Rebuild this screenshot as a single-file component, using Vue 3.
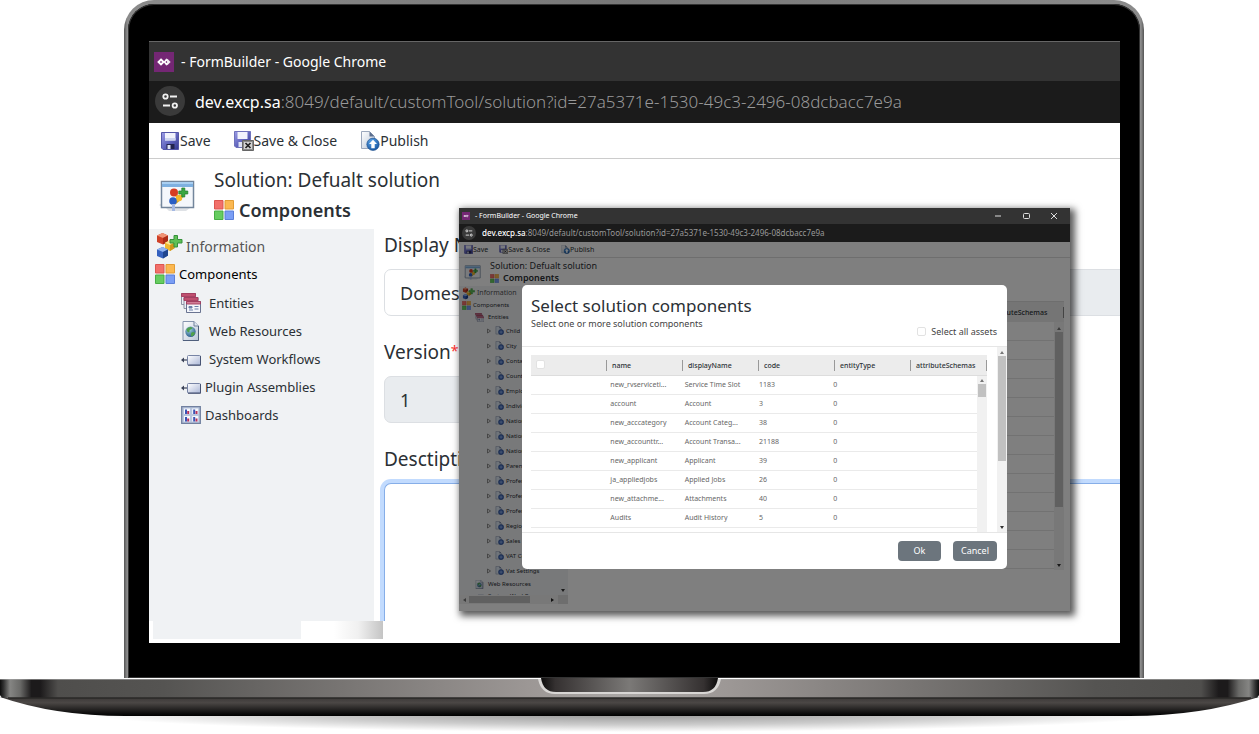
<script setup>
import { ref } from 'vue'

const links = [
  { label: 'Entities', icon: 'i-entities', gap: 'wide' },
  { label: 'Web Resources', icon: 'i-web', gap: 'wide' },
  { label: 'System Workflows', icon: 'i-flow', gap: 'wide' },
  { label: 'Plugin Assemblies', icon: 'i-flow', gap: '' },
  { label: 'Dashboards', icon: 'i-dash', gap: '' },
]
const entities = [
  'Child', 'City', 'Contact', 'Country', 'Employee', 'Individual', 'Nationality',
  'Nationality', 'Nationality', 'Parent', 'Profession', 'Profession', 'Profession',
  'Region', 'Sales', 'VAT Code', 'Vat Settings',
]
const columns = ['name', 'displayName', 'code', 'entityType', 'attributeSchemas']
const rows = [
  ['new_rvserviceti...', 'Service Time Slot', '1183', '0'],
  ['account', 'Account', '3', '0'],
  ['new_acccategory', 'Account Categ...', '38', '0'],
  ['new_accounttr...', 'Account Transa...', '21188', '0'],
  ['new_applicant', 'Applicant', '39', '0'],
  ['ja_appliedjobs', 'Applied Jobs', '26', '0'],
  ['new_attachme...', 'Attachments', '40', '0'],
  ['Audits', 'Audit History', '5', '0'],
]
const displayName = ref('Domestic')
const version = ref('1')
const description = ref('')
const all = ref(false)
const page = ref(false)
</script>

<template>
  <div class="laptop">
    <svg class="defs" width="0" height="0" aria-hidden="true">
      <defs>
        <linearGradient id="g-floppy" x1="0" y1="0" x2="1" y2="1">
          <stop offset="0" stop-color="#9c9ce6" /><stop offset=".5" stop-color="#6468c0" /><stop offset="1" stop-color="#34398e" />
        </linearGradient>
        <linearGradient id="g-page" x1="0" y1="0" x2="1" y2="1">
          <stop offset="0" stop-color="#fff" /><stop offset="1" stop-color="#b9c6d8" />
        </linearGradient>
        <radialGradient id="g-blue" cx=".4" cy=".3" r=".8">
          <stop offset="0" stop-color="#5fa6e8" /><stop offset="1" stop-color="#0d4c99" />
        </radialGradient>
        <linearGradient id="g-box" x1="0" y1="0" x2="1" y2="1">
          <stop offset="0" stop-color="#fff" /><stop offset="1" stop-color="#aab6d6" />
        </linearGradient>
        <radialGradient id="g-globe" cx=".4" cy=".3" r=".8">
          <stop offset="0" stop-color="#9cd0d8" /><stop offset="1" stop-color="#1f4f86" />
        </radialGradient>
        <linearGradient id="g-deck">
          <stop offset="0" stop-color="#0c0c0c" /><stop offset=".003" stop-color="#333" />
          <stop offset=".008" stop-color="#858583" /><stop offset=".016" stop-color="#6a6a68" />
          <stop offset=".025" stop-color="#1c1a1b" /><stop offset=".032" stop-color="#1c1a1b" />
          <stop offset=".046" stop-color="#4f4e4c" /><stop offset=".13" stop-color="#555452" />
          <stop offset=".42" stop-color="#9c9795" /><stop offset=".5" stop-color="#aaa7a5" /><stop offset=".58" stop-color="#9c9795" />
          <stop offset=".87" stop-color="#555452" /><stop offset=".954" stop-color="#4f4e4c" />
          <stop offset=".968" stop-color="#1c1a1b" /><stop offset=".975" stop-color="#1c1a1b" />
          <stop offset=".984" stop-color="#6a6a68" /><stop offset=".992" stop-color="#858583" />
          <stop offset=".997" stop-color="#333" /><stop offset="1" stop-color="#0c0c0c" />
        </linearGradient>
      </defs>
      <symbol id="i-logo" viewBox="0 0 20 20">
        <rect width="20" height="20" fill="#742774" />
        <path d="M7 7.500 9.500 10 7 12.500 4.500 10z" fill="none" stroke="#fff" stroke-width="1.900" />
        <path d="M12.300 7.800 14.500 10 12.300 12.200 10.600 10z" fill="none" stroke="#fff" stroke-width="1.600" />
        <path d="m13 6.800 3.200 3.200-3.200 3.200" fill="none" stroke="#fff" stroke-width="1" />
      </symbol>
      <symbol id="i-tune" viewBox="0 0 30 30">
        <circle cx="15" cy="15" r="15" fill="#3a3a3a" />
        <g fill="none" stroke="#f2f2f2" stroke-width="1.800">
          <circle cx="10.500" cy="10.500" r="2.200" /><path d="M15 10.500h7M8 19.500h7" /><circle cx="19.800" cy="19.500" r="2.200" />
        </g>
      </symbol>
      <symbol id="i-save" viewBox="0 0 18 18">
        <path d="M.5.500h17v17H2L.5 16z" fill="url(#g-floppy)" stroke="#5457a8" />
        <path d="M4 1h10.500v7.500H4z" fill="#f1f3fc" /><path d="M4 6h10.500v2.500H4z" fill="#cdd5f0" />
        <path d="M5.500 12h8v5h-8z" fill="#23254e" /><path d="M6.500 13h3v4h-3z" fill="#dfe3f5" />
      </symbol>
      <symbol id="i-saveclose" viewBox="0 0 20 20">
        <path d="M.5.500h16v16H2L.5 15z" fill="url(#g-floppy)" stroke="#6f72bb" />
        <path d="M3.500 1h10v7h-10z" fill="#f1f3fc" /><path d="M4.500 11h5v5h-5z" fill="#dfe3f5" />
        <path d="M8.500 9.500h11v10h-11z" fill="#8b8b8b" stroke="#666" />
        <path d="M10 11h8v7h-8z" fill="#d4d4d4" /><path d="m11.500 12 5 5m0-5-5 5" stroke="#222" stroke-width="1.700" />
      </symbol>
      <symbol id="i-publish" viewBox="0 0 20 20">
        <path d="M1.500.500h8l5 5v12h-13z" fill="url(#g-page)" stroke="#9aa7bc" /><path d="M9.500.500v5h5z" fill="#5c6f8e" />
        <circle cx="13" cy="13.300" r="6.200" fill="url(#g-blue)" stroke="#1e4f8b" stroke-width=".6" />
        <path d="m13 8.800 4 4.200h-2.300v4.200h-3.400V13H9z" fill="#fff" />
      </symbol>
      <symbol id="i-solution" viewBox="0 0 36 34">
        <path d="m0 25 4-3v6zM7 28h24l-4 3H10z" fill="#dfe2e6" />
        <path d="M2.500 1.500h32v26h-32z" fill="#f4f7fb" stroke="#73869c" stroke-width="1.500" />
        <path d="M3 2h31v5H3z" fill="#7eb0e0" /><path d="M3 2h31v2H3z" fill="#a9cff1" />
        <path d="m16 14 5 5-6 5m6-5 4-6" fill="none" stroke="#d8a52a" stroke-width="2.500" />
        <circle cx="15" cy="12.500" r="4" fill="#d63d22" /><circle cx="20" cy="18" r="3.200" fill="#f2b92c" />
        <circle cx="14" cy="21" r="3.800" fill="#2a5fc4" /><path d="M13 24h3v7h-3z" fill="#a5b9e4" />
        <path d="M22.800 8h3v3h3v3h-3v3h-3v-3h-3v-3h3z" fill="#3aa743" stroke="#1d7b29" stroke-width=".7" />
      </symbol>
      <symbol id="i-squares" viewBox="0 0 20 20">
        <g stroke-width="1">
          <path d="M.5.500h8.500v8.500H.5z" fill="#f2706a" stroke="#dc5650" /><path d="M11 .500h8.500v8.500H11z" fill="#fbb851" stroke="#e29c34" />
          <path d="M.5 11h8.500v8.500H.5z" fill="#66cc60" stroke="#47ad43" /><path d="M11 11h8.500v8.500H11z" fill="#7a9ef5" stroke="#5b7fd8" />
        </g>
      </symbol>
      <symbol id="i-info" viewBox="0 0 28 28">
        <path d="M8 9l8 6-8 6" fill="none" stroke="#888" stroke-width="2" />
        <path d="m7.500 1 5.500 2.500v6L8 12.500 2 10V3.500z" fill="#cf4027" /><path d="m7.500 1 5.500 2.500-5 2.500-6-2.500z" fill="#f09476" /><path d="M13 3.500v6l-5 3V6z" fill="#ab2c18" />
        <path d="m14.500 8.500 5 2.200v5.600L15 19l-5-2.400v-5.800z" fill="#f0b92f" /><path d="m14.500 8.500 5 2.200-4.500 2.300-5-2.200z" fill="#ffe591" /><path d="M19.500 10.700v5.600L15 19v-6z" fill="#cf961a" />
        <path d="m7.500 15 5.500 2.500v6l-5 3L2 24v-6.500z" fill="#3561bf" /><path d="m7.500 15 5.500 2.500L8 20l-6-2.500z" fill="#8fb3f0" /><path d="M13 17.500v6l-5 3V20z" fill="#1f458f" />
        <path d="M19 3.500h3.500v4h4.500V11h-4.500v4H19v-4h-4V7.500h4z" fill="#5fc055" stroke="#35913a" />
      </symbol>
      <symbol id="i-entities" viewBox="0 0 20 20">
        <g stroke="#83899c" stroke-width=".9">
          <path d="M.5.500h14v11H.5z" fill="#eceff6" /><path d="M.5.500h14v3H.5z" fill="#c0506f" stroke="#a33a5c" />
          <path d="M3 4.500h14v11H3z" fill="#eceff6" /><path d="M3 4.500h14v3H3z" fill="#c0506f" stroke="#a33a5c" />
          <path d="M5.500 8.500h14v11h-14z" fill="#f4f6fb" stroke="#5a6584" /><path d="M5.500 8.500h14v2.500h-14z" fill="#d17d97" stroke="#a33a5c" />
        </g>
        <path d="M8 13.500h3v1.500H8zM8 17h4M13.500 13.500h4M13.500 16h4" fill="#6b7fa8" stroke="#6b7fa8" />
      </symbol>
      <symbol id="i-web" viewBox="0 0 18 20">
        <path d="M1 .500h11l4.500 4.500v14.500H1z" fill="url(#g-page)" stroke="#8695ae" /><path d="M12 .500V5h4.500" fill="#dfe6f0" stroke="#71809b" />
        <path d="M16.500 5v14.500H1" fill="none" stroke="#4f5f7c" />
        <circle cx="8.500" cy="10.800" r="5.200" fill="url(#g-globe)" /><path d="M4.500 8.500c2-3 5-3 6-1.500-1 2-3 1-3 3s-2 2-3-1.500zM9 12c2-2 4-1 4 .5-1 2-3 3.500-4 2.500z" fill="#4ea04c" />
      </symbol>
      <symbol id="i-flow" viewBox="0 0 20 20">
        <path d="M1.500 11h4.500" fill="none" stroke="#3a4258" stroke-width="1.200" /><path d="M0 11l3-2.500v5z" fill="#3a4258" />
        <rect x="6.500" y="6.500" width="13" height="9.500" rx="1" fill="url(#g-box)" stroke="#7784a5" /><path d="M7 16.200h12.700V7" fill="none" stroke="#3d4868" />
      </symbol>
      <symbol id="i-dash" viewBox="0 0 20 18">
        <path d="M.7.700h18.600v16.600H.7z" fill="#b9c6de" stroke="#71809f" stroke-width="1.300" />
        <g fill="#f6f8fc"><path d="M3 2.500h6v5.500H3zM11.200 2.500h6v5.500h-6zM3 10h6v5.500H3zM11.200 10h6v5.500h-6z" /></g>
        <g fill="#3a53b4"><path d="M4 3.500h2V8H4zM12.200 3.500h2V8h-2zM4 11h2v4.500H4zM12.200 11h2v4.500h-2z" /></g>
        <g fill="#b8325c"><path d="M6.200 5h2v3h-2zM14.500 5h2v3h-2zM6.200 12.500h2v3h-2zM14.500 12.500h2v3h-2z" /></g>
      </symbol>
      <symbol id="i-entity" viewBox="0 0 20 20">
        <path d="M2 1h8l4 4v13H2z" fill="#dfe8f4" stroke="#8795ad" stroke-width="1.200" /><path d="M10 1v4h4z" fill="#51617f" />
        <circle cx="13.500" cy="13.500" r="5.800" fill="#3a63b4" stroke="#27468a" /><path d="M13.500 10v7M10 13.500h7" stroke="#a5c1f0" stroke-width="1.500" />
      </symbol>
    </svg>

    <main class="lid">
      <section class="screen">
        <header class="titlebar"><svg class="logo"><use href="#i-logo" /></svg><span>- FormBuilder - Google Chrome</span></header>
        <div class="address"><svg class="tune"><use href="#i-tune" /></svg><p class="url"><b>dev.excp.sa</b>:8049/default/customTool/solution?id=27a5371e-1530-49c3-2496-08dcbacc7e9a</p></div>
        <nav class="tools">
          <button type="button"><svg class="ic18"><use href="#i-save" /></svg>Save</button>
          <button type="button"><svg class="ic20"><use href="#i-saveclose" /></svg>Save &amp; Close</button>
          <button type="button"><svg class="ic20"><use href="#i-publish" /></svg>Publish</button>
        </nav>
        <div class="heading">
          <svg class="badge"><use href="#i-solution" /></svg>
          <div>
            <p class="solution">Solution: Defualt solution</p>
            <h1><svg class="ic20"><use href="#i-squares" /></svg>Components</h1>
          </div>
        </div>
        <div class="work">
          <aside class="side">
            <a href="#info" class="top info"><svg class="ic28"><use href="#i-info" /></svg>Information</a>
            <a href="#components" class="top"><svg class="ic20"><use href="#i-squares" /></svg>Components</a>
            <ul>
              <li v-for="l in links" :key="l.label"><a href="#list" :class="l.gap"><svg class="ic20"><use :href="'#' + l.icon" /></svg>{{ l.label }}</a></li>
            </ul>
          </aside>
          <form class="form" @submit.prevent>
            <div class="pair">
              <div class="field"><label for="dn">Display Name</label><input id="dn" v-model="displayName" type="text"></div>
              <div class="field"><label for="pk">Package</label><input id="pk" type="text" class="locked" readonly></div>
            </div>
            <div class="pair">
              <div class="field"><label for="ver">Version<sup>*</sup></label><input id="ver" v-model="version" type="text" class="locked" readonly></div>
              <div class="field"></div>
            </div>
            <div class="field grow"><label for="desc">Desctiption</label><textarea id="desc" v-model="description"></textarea></div>
          </form>
        </div>
        <div class="tail"><span class="fade"></span></div>

        <section class="win">
          <header class="w-title">
            <svg class="w-logo"><use href="#i-logo" /></svg><span>- FormBuilder - Google Chrome</span>
            <svg class="w-ctl" viewBox="0 0 64 8"><path d="M1 4h6M57 1l6 6m0-6-6 6" fill="none" stroke="#ddd" /><rect x="29.500" y="1.500" width="6" height="5" rx="1" fill="none" stroke="#ddd" /></svg>
          </header>
          <div class="w-address"><svg class="w-tune"><use href="#i-tune" /></svg><p><b>dev.excp.sa</b>:8049/default/customTool/solution?id=27a5371e-1530-49c3-2496-08dcbacc7e9a</p></div>
          <div class="w-body">
            <nav class="w-tools">
              <button type="button"><svg class="ic9"><use href="#i-save" /></svg>Save</button>
              <button type="button"><svg class="ic9"><use href="#i-saveclose" /></svg>Save &amp; Close</button>
              <button type="button"><svg class="ic9"><use href="#i-publish" /></svg>Publish</button>
            </nav>
            <div class="w-heading">
              <svg class="w-badge"><use href="#i-solution" /></svg>
              <div><p>Solution: Defualt solution</p><h2><svg class="ic9"><use href="#i-squares" /></svg>Components</h2></div>
            </div>
            <div class="w-work">
              <aside class="w-side">
                <div class="w-list">
                  <a href="#w-info" class="w-info"><svg class="ic12"><use href="#i-info" /></svg>Information</a>
                  <a href="#w-comp" class="w-comp"><svg class="ic9"><use href="#i-squares" /></svg>Components</a>
                  <a href="#w-ent" class="w-sub"><svg class="ic9"><use href="#i-entities" /></svg>Entities</a>
                  <a v-for="(e, i) in entities" :key="i" href="#w-entity" class="w-leaf"><svg class="tri" viewBox="0 0 4 6"><path d="M.5 1 3.500 3 .5 5z" fill="none" stroke="#666" stroke-width=".7" /></svg><svg class="ic9"><use href="#i-entity" /></svg>{{ e }}</a>
                  <a href="#w-web" class="w-sub"><svg class="ic9"><use href="#i-web" /></svg>Web Resources</a>
                  <a href="#w-flow" class="w-sub"><svg class="ic9"><use href="#i-flow" /></svg>System Workflows</a>
                </div>
                <div class="w-vbar"><i class="down"></i></div>
                <div class="w-hbar"><i class="left"></i><span></span><i class="right"></i></div>
                <div class="w-corner"></div>
              </aside>
              <div class="w-main">
                <div class="w-head"><span v-for="n in 5" :key="n"></span><span>attributeSchemas</span></div>
                <div class="w-lines"><div class="bar"><i class="up"></i><span></span><i class="down"></i></div></div>
              </div>
            </div>
            <div class="shade">
              <div class="modal" role="dialog" aria-labelledby="dlg">
                <header class="m-head">
                  <h2 id="dlg">Select solution components</h2>
                  <p>Select one or more solution components</p>
                  <label for="all"><input id="all" v-model="all" type="checkbox">Select all assets</label>
                </header>
                <div class="m-body">
                  <div class="grid">
                    <table>
                      <thead><tr><th><input v-model="page" type="checkbox" aria-label="Select rows"></th><th v-for="c in columns" :key="c">{{ c }}</th></tr></thead>
                      <tbody><tr v-for="r in rows" :key="r[0]"><td></td><td v-for="(c, i) in r" :key="i">{{ c }}</td><td></td></tr></tbody>
                    </table>
                    <div class="bar inner"><i class="up"></i><span></span></div>
                  </div>
                  <div class="bar outer"><i class="up"></i><span></span><i class="down"></i></div>
                </div>
                <footer class="m-foot"><button type="button">Ok</button><button type="button">Cancel</button></footer>
              </div>
            </div>
          </div>
        </section>
      </section>
    </main>

    <svg class="base" viewBox="0 0 1259 56" preserveAspectRatio="none" aria-hidden="true">
      <defs>
        <linearGradient id="b-under" x1="0" y1="0" x2="0" y2="1"><stop offset="0" stop-color="#3a3736" /><stop offset=".3" stop-color="#4b4745" /><stop offset=".9" stop-color="#090909" /><stop offset="1" stop-color="#000" /></linearGradient>
        <linearGradient id="b-notch"><stop offset="0" stop-color="#0c0b0b" /><stop offset=".08" stop-color="#353131" /><stop offset=".5" stop-color="#7b7977" /><stop offset=".92" stop-color="#353131" /><stop offset="1" stop-color="#0c0b0b" /></linearGradient>
        <radialGradient id="b-shadow"><stop offset="0" stop-color="#000" stop-opacity=".42" /><stop offset=".6" stop-color="#000" stop-opacity=".2" /><stop offset="1" stop-color="#000" stop-opacity="0" /></radialGradient>
      </defs>
      <ellipse cx="629" cy="36" rx="540" ry="18" fill="url(#b-shadow)" />
      <path d="M0 19H1259Q1200 38 1130 38H125Q55 38 0 19z" fill="url(#b-under)" />
      <path d="M0 1H1259V17Q1258 20 1254 20H5Q1 20 0 17z" fill="url(#g-deck)" />
      <path d="M0 1.500H1259" stroke="#aaa" stroke-opacity=".6" /><path d="M8 20H1251" stroke="#2a2827" stroke-width="1.500" />
      <path d="M538 1Q541 16 555 16H704Q718 16 721 1z" fill="#d8d6d4" />
      <path d="M541 0Q543 14 556 14H703Q716 14 718 0z" fill="url(#b-notch)" />
    </svg>
  </div>
</template>

<style scoped>
* { box-sizing: border-box; }
.laptop { min-height: 100vh; display: flex; flex-direction: column; font-family: "Noto Sans", "Open Sans", sans-serif; color: #2b3035; background: #fff; }
.defs { position: absolute; }
svg { display: block; flex: none; }
p, h1, h2, ul { margin: 0; padding: 0; }
ul { list-style: none; }
a { color: inherit; text-decoration: none; }
button { font: inherit; color: inherit; background: none; border: 0; padding: 0; display: flex; align-items: center; white-space: nowrap; }
i { display: block; width: 0; height: 0; border: 2px solid transparent; flex: none; }
.up { border-bottom: 3px solid #777; border-top: 0; }
.down { border-top: 3px solid #333; border-bottom: 0; }
.left { border-right: 3px solid #777; border-left: 0; }
.right { border-left: 3px solid #222; border-right: 0; }
.ic9 { width: 9px; height: 9px; }
.ic12 { width: 13px; height: 13px; }
.ic18 { width: 18px; height: 18px; }
.ic20 { width: 20px; height: 20px; }
.ic28 { width: 28px; height: 28px; }

.lid { flex: 1; display: flex; margin: 0 115px 0 124px; padding: 37px 20px 35px 21px; background: linear-gradient(#000, #000) padding-box, linear-gradient(90deg, #555, #8b8b8b 3px, #777 50%, #8b8b8b calc(100% - 3px), #555) border-box; border: solid transparent; border-width: 4px 4px 0; border-radius: 30px 30px 0 0; box-shadow: inset 0 0 0 1px #333; }
.screen { position: relative; flex: 1; min-width: 0; display: flex; flex-direction: column; background: #fff; }
.titlebar { flex: none; height: 40px; display: flex; align-items: center; gap: 7px; padding-left: 5px; background: #333; border-top: 1px solid #666; color: #fff; font-size: 14px; }
.logo { width: 20px; height: 20px; }
.address { flex: none; height: 42px; display: flex; align-items: center; gap: 10px; padding: 0 0 2px 6px; background: #1b1b1b; color: #999; font-size: 17px; font-weight: 300; white-space: nowrap; overflow: hidden; }
.tune { width: 30px; height: 30px; }
.url b { font-weight: 400; font-size: 16px; color: #fff; }
.tools { flex: none; height: 36px; display: flex; align-items: center; gap: 23px; padding-left: 12px; border-bottom: 1px solid #ccc; font-size: 14px; }
.tools button { gap: 1px; }
.tools button + button { gap: 0; }
.heading { flex: none; height: 70px; display: flex; gap: 19px; padding: 6px 0 0 10px; }
.badge { width: 36px; height: 34px; margin-top: 15px; }
.solution { font-size: 19px; line-height: 30px; }
h1 { display: flex; align-items: center; gap: 5px; font-size: 18px; font-weight: 600; line-height: 30px; }
.work { flex: 1; min-height: 0; display: flex; }
.side { width: 225px; flex: none; padding: 3px 0 0 6px; background: #f0f2f4; }
.side a { display: flex; align-items: center; height: 28px; gap: 4px; font-size: 13px; white-space: nowrap; }
.side .top { gap: 4px; color: #000; }
.side .info { font-size: 14px; gap: 3px; color: #555; }
.side ul { padding: 1px 0 0 26px; }
.side .wide { gap: 8px; }
.form { flex: 1; min-width: 0; display: flex; flex-direction: column; gap: 22px; padding: 2px 0 0 10px; overflow: hidden; font-size: 19px; }
.pair { flex: none; display: flex; gap: 24px; }
.field { flex: 1; display: flex; flex-direction: column; gap: 10px; min-width: 0; }
.field label { line-height: 28px; }
sup { color: #f33; font-size: 14px; line-height: 0; vertical-align: 3px; }
.field input { width: 100%; height: 47px; padding: 0 15px; font: inherit; font-size: 18px; color: inherit; border: 1px solid #dcdfe3; border-radius: 7px; background: #fff; }
.pair .field:last-child input { border-radius: 7px 0 0 7px; border-right: 0; }
.field input.locked { background: #e9ecef; }
textarea { flex: 1; width: 100%; padding: 10px 15px; resize: none; outline: 0; font: inherit; border: 1px solid #86aee8; border-width: 1px 0 0 1px; border-radius: 7px 0 0 0; box-shadow: 0 0 0 4px #c2dbfe; }
.tail { flex: none; position: relative; height: 22px; margin: 0 1px; padding: 0 0 4px 3px; background: #fff; display: flex; }
.tail::before { content: ""; width: 148px; background: #f0f2f4; }
.fade { width: 82px; background: linear-gradient(90deg, #fff 40%, #f0f0f0 70%, #c4c4c4); }

.win { position: absolute; inset: 167px 50px 32px 310px; display: flex; flex-direction: column; background: #fff; box-shadow: 3px 3px 7px 2px rgba(0, 0, 0, .65); font-size: 7px; line-height: 10px; overflow: hidden; }
.w-title { flex: none; height: 16px; display: flex; align-items: center; gap: 5px; padding: 0 12px 0 3px; background: #333; color: #fff; }
.w-logo { width: 8px; height: 8px; }
.w-ctl { width: 64px; height: 8px; margin-left: auto; }
.w-address { flex: none; height: 18px; display: flex; align-items: center; gap: 6px; padding-left: 3px; background: #1b1b1b; color: #999; font-size: 8px; white-space: nowrap; }
.w-tune { width: 14px; height: 14px; }
.w-address b { font-weight: 500; color: #fff; }
.w-body { position: relative; flex: 1; min-height: 0; display: flex; flex-direction: column; }
.w-tools { flex: none; height: 16px; display: flex; gap: 11px; padding-left: 5px; border-bottom: 1px solid #ddd; }
.w-tools button { gap: 0; }
.w-heading { flex: none; height: 28px; display: flex; gap: 9px; padding: 2px 0 0 5px; }
.w-badge { width: 17px; height: 16px; margin-top: 5px; }
.w-heading p { font-size: 9px; line-height: 12px; }
.w-heading h2 { display: flex; align-items: center; gap: 4px; font-size: 9px; font-weight: 600; line-height: 12px; }
.w-work { flex: 1; min-height: 0; display: flex; }
.w-side { width: 109px; flex: none; margin-bottom: 7px; display: grid; grid-template: minmax(0, 1fr) 9px / minmax(0, 1fr) 10px; background: #f0f2f4; }
.w-list { overflow: hidden; padding: 1px 0 0 3px; }
.w-list a { display: flex; align-items: center; height: 12px; white-space: nowrap; font-size: 6px; }
.w-list .w-info { font-size: 7px; gap: 2px; color: #555; }
.w-list .w-comp { gap: 2px; }
.w-list .w-sub { padding-left: 13px; gap: 4px; }
.w-list .w-leaf { height: 15px; padding-left: 25px; gap: 2px; }
.tri { width: 4px; height: 6px; margin-right: 2px; }
.w-vbar { display: flex; align-items: flex-end; justify-content: center; padding-bottom: 3px; background: #f0f2f4; }
.w-hbar { display: flex; align-items: center; gap: 3px; padding: 0 4px; background: #f1f1f1; }
.w-hbar span { width: 61px; height: 7px; background: #c1c1c1; }
.w-hbar .right { margin-left: auto; }
.w-corner { background: #dcdcdc; }
.w-main { flex: 1; min-width: 0; display: flex; flex-direction: column; padding: 15px 6px 41px 10px; }
.w-head { flex: none; height: 21px; display: grid; grid-template-columns: repeat(6, 1fr); align-items: center; background: #ebebeb; border-top: 1px solid #ddd; font-weight: 500; }
.w-head span { height: 11px; padding-left: 5px; line-height: 11px; border-right: 1px solid #888; }
.w-lines { flex: 1; display: flex; justify-content: flex-end; background: repeating-linear-gradient(transparent 0 18px, #e4e4e4 18px 19px); }
.bar { width: 10px; display: flex; flex-direction: column; align-items: center; padding: 5px 0 3px; background: #f1f1f1; }
.bar span { width: 8px; height: 175px; margin-top: 2px; background: #c1c1c1; }
.bar .down { margin-top: auto; }

.shade { position: absolute; inset: 0; display: flex; align-items: flex-start; justify-content: center; padding-top: 43px; background: rgba(0, 0, 0, .5); }
.modal { width: 485px; background: #fff; border-radius: 5px; overflow: hidden; }
.m-head { padding: 8px 10px 0 9px; height: 62px; border-bottom: 1px solid #e6e6e6; }
.m-head h2 { font-size: 17px; font-weight: 400; line-height: 25px; }
.m-head p { font-size: 9px; line-height: 12px; color: #444; }
.m-head label { display: flex; align-items: center; justify-content: flex-end; gap: 5px; margin-top: -5px; font-size: 9px; line-height: 13px; color: #444; }
.modal input { appearance: none; width: 9px; height: 9px; margin: 0; border: 1px solid #e2e2e2; border-radius: 2px; background: #fff; }
.m-body { display: flex; justify-content: space-between; height: 185px; padding-left: 9px; }
.grid { position: relative; width: 456px; margin-top: 8px; overflow: hidden; }
table, thead, tbody { display: block; }
tr { display: grid; grid-template-columns: repeat(6, 1fr); align-items: center; }
thead tr { height: 21px; background: #ececec; border-bottom: 1px solid #ddd; }
tbody { margin-right: 10px; }
tbody tr { height: 19px; border-bottom: 1px solid #eaeaea; }
th { height: 11px; padding: 0 0 0 5px; line-height: 11px; text-align: left; font-weight: 500; border-right: 1px solid #999; }
thead input { display: block; margin-top: 2px; }
td { padding: 0 0 0 5px; color: #666; line-height: 12px; white-space: nowrap; }
.inner { position: absolute; top: 21px; right: 0; bottom: 0; padding-top: 3px; }
.inner span { height: 13px; }
.outer { padding-top: 4px; }
.outer span { height: 105px; }
.m-foot { display: flex; justify-content: flex-end; gap: 12px; height: 37px; padding: 8px 10px; border-top: 1px solid #e6e6e6; }
.m-foot button { justify-content: center; min-width: 43px; height: 20px; padding: 0 8px; border-radius: 4px; background: #6c757d; color: #fff; font-size: 9px; }
.base { width: 100%; height: 56px; }
</style>

<style>
body { margin: 0; background: #fff; }
</style>
